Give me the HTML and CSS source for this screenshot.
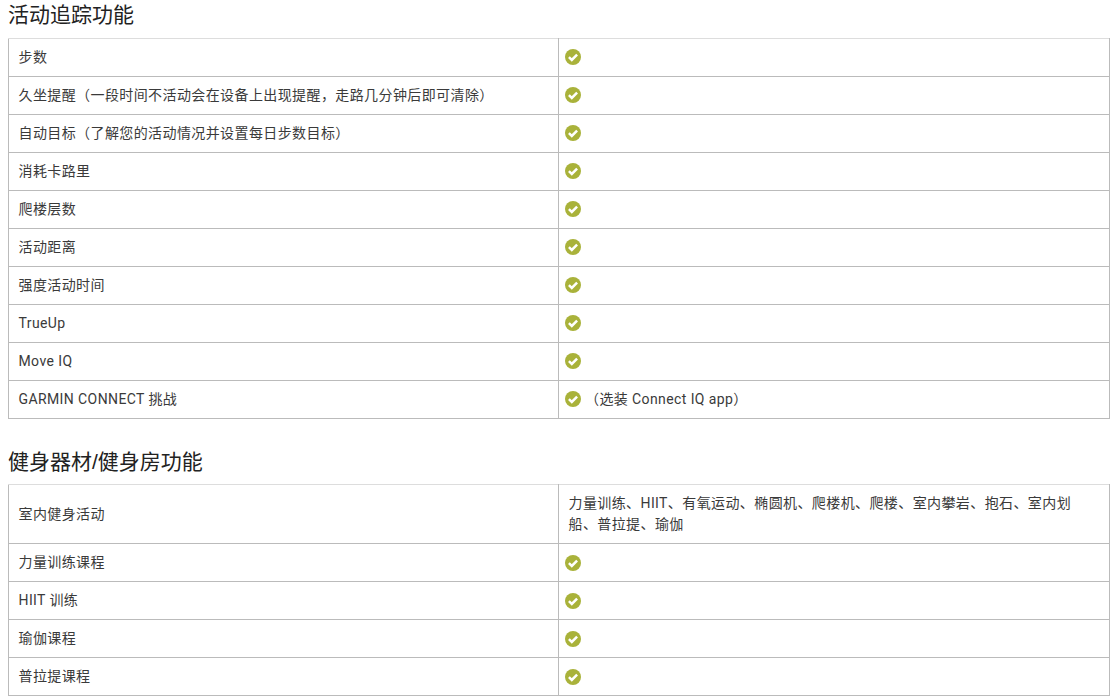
FILE: index.html
```html
<!DOCTYPE html>
<html lang="zh-CN">
<head>
<meta charset="utf-8">
<title>功能</title>
<link rel="stylesheet" href="styles.css">
</head>
<body>
<svg class="defs" width="0" height="0" aria-hidden="true"><symbol id="check" viewBox="0 0 16 16"><circle cx="8" cy="8" r="8" fill="#a9b23a"/><path d="M3.9 8.2l2.9 2.8 5.3-5.4" fill="none" stroke="#fff" stroke-width="2.5"/></symbol></svg>
<section class="group">
<h2 class="title">活动追踪功能</h2>
<table class="specs">
<tr><td>步数</td><td><div class="mark"><svg class="tick"><use href="#check"/></svg></div></td></tr>
<tr><td>久坐提醒（一段时间不活动会在设备上出现提醒，走路几分钟后即可清除）</td><td><div class="mark"><svg class="tick"><use href="#check"/></svg></div></td></tr>
<tr><td>自动目标（了解您的活动情况并设置每日步数目标）</td><td><div class="mark"><svg class="tick"><use href="#check"/></svg></div></td></tr>
<tr><td>消耗卡路里</td><td><div class="mark"><svg class="tick"><use href="#check"/></svg></div></td></tr>
<tr><td>爬楼层数</td><td><div class="mark"><svg class="tick"><use href="#check"/></svg></div></td></tr>
<tr><td>活动距离</td><td><div class="mark"><svg class="tick"><use href="#check"/></svg></div></td></tr>
<tr><td>强度活动时间</td><td><div class="mark"><svg class="tick"><use href="#check"/></svg></div></td></tr>
<tr><td>TrueUp</td><td><div class="mark"><svg class="tick"><use href="#check"/></svg></div></td></tr>
<tr><td>Move IQ</td><td><div class="mark"><svg class="tick"><use href="#check"/></svg></div></td></tr>
<tr><td>GARMIN CONNECT 挑战</td><td><div class="mark"><svg class="tick"><use href="#check"/></svg><span class="note">（选装 Connect IQ app）</span></div></td></tr>
</table>
</section>
<section class="group">
<h2 class="title">健身器材/健身房功能</h2>
<table class="specs">
<tr><td>室内健身活动</td><td>力量训练、HIIT、有氧运动、椭圆机、爬楼机、爬楼、室内攀岩、抱石、室内划船、普拉提、瑜伽</td></tr>
<tr><td>力量训练课程</td><td><div class="mark"><svg class="tick"><use href="#check"/></svg></div></td></tr>
<tr><td>HIIT 训练</td><td><div class="mark"><svg class="tick"><use href="#check"/></svg></div></td></tr>
<tr><td>瑜伽课程</td><td><div class="mark"><svg class="tick"><use href="#check"/></svg></div></td></tr>
<tr><td>普拉提课程</td><td><div class="mark"><svg class="tick"><use href="#check"/></svg></div></td></tr>
</table>
</section>
</body>
</html>
```
FILE: styles.css
```css
html, body {
  margin: 0;
  padding: 0;
  background: #fff;
}
body {
  padding: 0 10px 0 8px;
  font-family: Roboto, "Noto Sans CJK SC", sans-serif;
  color: #3a3a3a;
  overflow: hidden;
}
.defs {
  position: absolute;
}
.group + .group {
  margin-top: 28px;
}
.group + .group .title {
  margin-bottom: 7px;
}
.title {
  margin: 0 0 8px;
  font-family: "Liberation Sans", "Noto Sans CJK SC", sans-serif;
  font-size: 21px;
  line-height: 30px;
  font-weight: 400;
  color: #222;
}
.specs {
  width: 1102px;
  table-layout: fixed;
  border-collapse: collapse;
  font-size: 14px;
  letter-spacing: .4px;
  line-height: 21px;
}
.specs td {
  padding: 8px 9.5px;
  height: 21px;
  border: 1px solid #bbb;
  vertical-align: middle;
}
.specs td:first-child {
  width: 530px;
}
.specs tr:first-child td {
  border-top-color: #ddd;
}
.mark {
  display: flex;
  align-items: flex-start;
  height: 21px;
}
.tick {
  flex: none;
  width: 16px;
  height: 16px;
  margin: 2px 0 0 -3.5px;
}
.group + .group .tick {
  margin-top: 3px;
}
.note {
  margin-left: 4px;
}
```
